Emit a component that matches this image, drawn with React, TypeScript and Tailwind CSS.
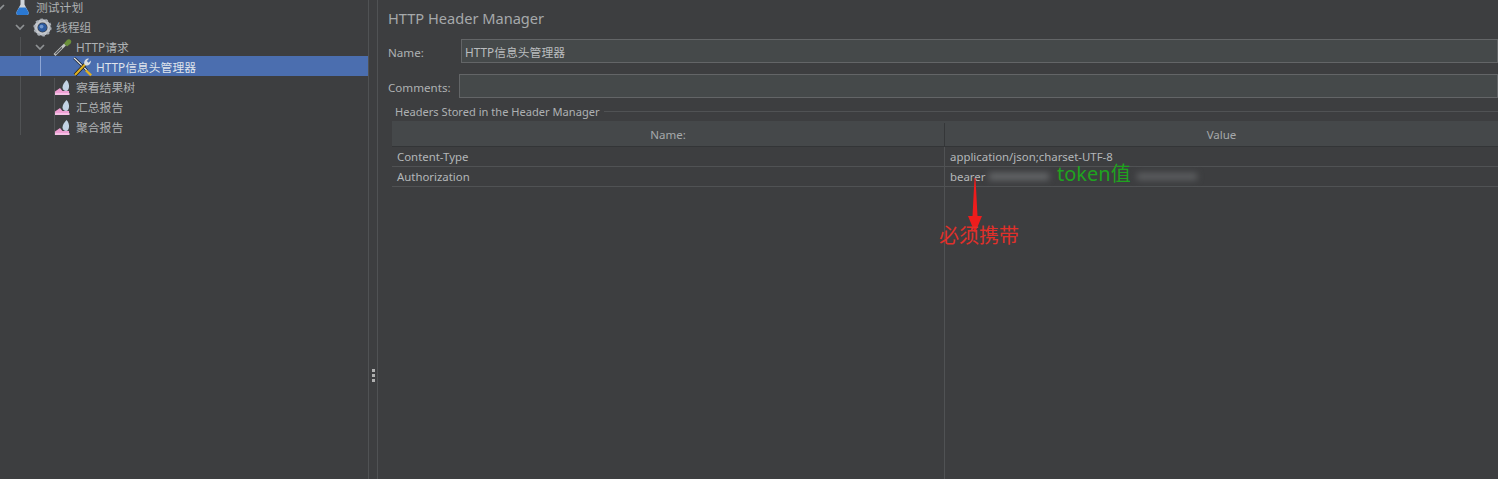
const font = { fontFamily: '"Noto Sans", "Noto Sans CJK SC", sans-serif' };

function Chevron() {
  return (
    <svg className="mr-[7px] shrink-0" width="10" height="10" viewBox="0 0 10 10" fill="none" stroke="#8f9294" strokeWidth="1.700">
      <path d="M1 3l4 4 4-4" />
    </svg>
  );
}

function FlaskIcon() {
  return (
    <svg width="13" height="16" viewBox="0 0 13 16">
      <path d="M4.500 0h4v5.500L12.500 13c.6 1.500-.2 3-1.500 3H2C.7 16-.1 14.500.5 13l4-7.500z" fill="#cfd5db" />
      <path d="M3.200 8.500h6.600l2.700 4.500c.6 1.500-.2 3-1.500 3H2C.7 16-.1 14.500.5 13z" fill="#2a78d2" />
    </svg>
  );
}

function GearIcon() {
  return (
    <svg width="19" height="19" viewBox="0 0 20 20">
      <circle cx="10" cy="10" r="7" fill="none" stroke="#c3c7cd" strokeWidth="3.400" />
      <circle cx="10" cy="10" r="8.400" fill="none" stroke="#a9aeb5" strokeWidth="2.400" strokeDasharray="2.600 2.700" />
      <circle cx="10" cy="10" r="4.600" fill="#2b5aa0" />
      <circle cx="9" cy="9" r="2" fill="#6f97cf" />
    </svg>
  );
}

function DropperIcon() {
  return (
    <svg width="20" height="18" viewBox="0 0 20 18" fill="none">
      <path d="M1.500 17 12 6.500" stroke="#c2c5c2" strokeWidth="2.600" />
      <path d="M2.500 16 9 9.500" stroke="#4d5155" strokeWidth="1.100" />
      <path d="M11 5.500l3-3.500c1-1 3-1 3.800.2.800 1 .6 2.600-.4 3.500L14 8.500z" fill="#6a8f3a" />
    </svg>
  );
}

function ToolsIcon() {
  return (
    <svg width="20" height="20" viewBox="0 0 20 20" fill="none">
      <path d="M1 1l1.500 1.200L14 13.500" stroke="#16181c" strokeWidth="2.600" />
      <path d="M1 1l1.500 1.200L14 13.500" stroke="#e3e5e7" strokeWidth="1.300" />
      <path d="M13.500 12.500l5.500 5-1.700 1.800-5.300-5.300z" fill="#e0b020" />
      <path d="M2 18 12 7.500" stroke="#16181c" strokeWidth="3.400" />
      <path d="M2 18 12 7.500" stroke="#e0b020" strokeWidth="2.200" />
      <path d="M11.500 7.500c-1-2.500.5-5.500 3.500-6l1 .2-2.200 2.300 1.700 1.700 2.300-2.200c.5 3-2 5.500-5.300 5z" fill="#d9dcdf" />
    </svg>
  );
}

function ReportIcon() {
  return (
    <svg width="15" height="15" viewBox="0 0 15 15">
      <path d="M0 15v-3.500L5 8l2.500 3H14v4z" fill="#efa0d4" />
      <path d="M0 14h14.500" stroke="#f5bfe4" strokeWidth="2" />
      <path d="M11.500 0c1.800 2 2.800 4.500 2.500 7-.3 2.400-1.400 4-3 4-1.800 0-3.500-1.500-3.500-3.500C7.500 5 9.500 2 11.500 0z" fill="#c3d2e4" />
    </svg>
  );
}

function TreeRow({ indent, icon, label, arrow, selected }: { indent: string; icon: React.ReactNode; label: string; arrow?: boolean; selected?: boolean }) {
  return (
    <div className={`flex h-5 items-center ${selected ? "bg-[#4b6eaf] text-[#dfe4ec]" : "text-[#aeb1b3]"}`}>
      <div className={`flex shrink-0 items-center justify-end pt-[2px] ${indent}`}>
        {arrow && <Chevron />}
      </div>
      <div className="flex w-[21px] shrink-0 items-center justify-center pt-[2px]">{icon}</div>
      <span className="ml-[3px] whitespace-nowrap pt-[4px] text-[11.800px]">{label}</span>
    </div>
  );
}

function Tree() {
  return (
    <div className="relative -mt-[4px]">
      <TreeRow indent="w-[12px]" arrow icon={<FlaskIcon />} label="测试计划" />
      <TreeRow indent="w-[32px]" arrow icon={<GearIcon />} label="线程组" />
      <TreeRow indent="w-[52px]" arrow icon={<DropperIcon />} label="HTTP请求" />
      <TreeRow indent="w-[72px]" icon={<ToolsIcon />} label="HTTP信息头管理器" selected />
      <TreeRow indent="w-[52px]" icon={<ReportIcon />} label="察看结果树" />
      <TreeRow indent="w-[52px]" icon={<ReportIcon />} label="汇总报告" />
      <TreeRow indent="w-[52px]" icon={<ReportIcon />} label="聚合报告" />
      {/* tree guide lines */}
      <div className="absolute left-[20px] top-[41px] h-[19px] w-px bg-[#505254]" />
      <div className="absolute left-[20px] top-[80px] h-[59px] w-px bg-[#505254]" />
      <div className="absolute left-[40px] top-[60px] h-[20px] w-px bg-[#8ea6d4]" />
      <div className="absolute left-[54px] top-[82px] h-[57px] w-px bg-[#505254]" />
    </div>
  );
}

function Field({ label, value, labelWidth }: { label: string; value?: string; labelWidth: string }) {
  return (
    <div className="flex items-center">
      <span className={`shrink-0 pt-[4px] text-[11.600px] text-[#aeb1b3] ${labelWidth}`}>{label}</span>
      <div className="flex h-6 flex-1 items-center border border-[#636567] bg-[#45494a] pl-[3px] pt-[3px] text-[11.800px] text-[#babdbf]">
        {value}
      </div>
    </div>
  );
}

function TableRow({ name, children }: { name: string; children: React.ReactNode }) {
  return (
    <div className="flex h-5 border-b border-[#505254] text-[11.400px] text-[#b4b7b9]">
      <div className="flex w-[553px] shrink-0 items-center border-r border-[#505254] pl-[5px]">{name}</div>
      <div className="flex flex-1 items-center pl-[5px]">{children}</div>
    </div>
  );
}

export default function App() {
  return (
    <div className="flex h-[479px] w-[1498px] overflow-hidden bg-[#3d3e40]" style={font}>
      <div className="w-[368px] shrink-0 overflow-hidden">
        <Tree />
      </div>
      <div className="flex w-[10px] shrink-0 flex-col items-center justify-center gap-[2px] border-x border-[#505254] pt-[271px]">
        <div className="h-[3px] w-[3px] bg-[#b0b0b0]" />
        <div className="h-[3px] w-[3px] bg-[#b0b0b0]" />
        <div className="h-[3px] w-[3px] bg-[#b0b0b0]" />
      </div>
      <div className="relative flex-1 pl-[10px] pt-[7px]">
        <h1 className="h-[23px] text-[14.600px] leading-[22px] font-normal text-[#a6a9ab]">HTTP Header Manager</h1>
        <div className="mt-[9px]">
          <Field label="Name:" value="HTTP信息头管理器" labelWidth="w-[73px]" />
        </div>
        <div className="mt-[11px]">
          <Field label="Comments:" labelWidth="w-[71px]" />
        </div>
        {/* titled group */}
        <div className="relative mt-[13px] ml-[3px] border-t border-[#505254] pt-[9px]">
          <span className="absolute -top-[8px] left-0 bg-[#3d3e40] px-[4px] text-[11.100px] leading-[16px] text-[#aeb1b3]">
            Headers Stored in the Header Manager
          </span>
          <div className="ml-px flex h-[26px] border-b border-[#333537] bg-[#45484a] pt-[2px] text-[11.500px] text-[#a6a9ab]">
            <div className="flex w-[553px] shrink-0 items-center justify-center border-r border-[#353739]">Name:</div>
            <div className="flex w-[553px] shrink-0 items-center justify-center">Value</div>
          </div>
          <div className="ml-px">
            <TableRow name="Content-Type">application/json;charset-UTF-8</TableRow>
            <TableRow name="Authorization">
              <span>bearer</span>
              <span className="ml-[4px] h-[7px] w-[60px] bg-[#66686a] blur-[3px]" />
              <span className="ml-[88px] h-[7px] w-[60px] bg-[#5d5f61] blur-[3px]" />
            </TableRow>
          </div>
        </div>
        {/* column divider runs to the bottom of the empty table */}
        <div className="absolute left-[566px] top-[187px] bottom-0 w-px bg-[#505254]" />
        {/* annotations drawn over the screenshot */}
        <span className="absolute left-[679px] top-[161px] text-[20px] leading-[26px] text-[#1fa31f]">token值</span>
        <svg className="absolute left-[590px] top-[178px]" width="14" height="55" viewBox="0 0 14 55">
          <path d="M6.500 0h1l2 38H14l-7 17-7-17h4.500z" fill="#ee1c1c" />
        </svg>
        <span className="absolute left-[561px] top-[222px] text-[20px] leading-[28px] text-[#e0302a]">必须携带</span>
      </div>
    </div>
  );
}
